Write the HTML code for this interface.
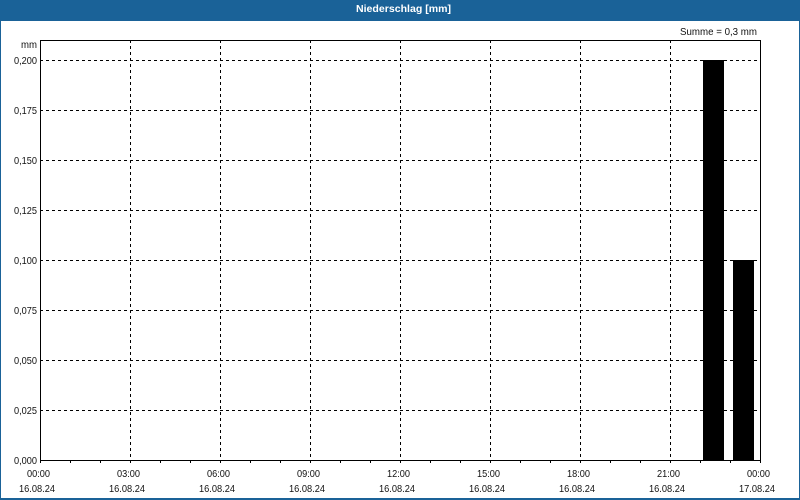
<!DOCTYPE html>
<html><head><meta charset="utf-8"><style>
html,body{margin:0;padding:0;background:#fff}
svg{display:block}
text{font-family:"Liberation Sans",sans-serif;font-size:10.5px;fill:#111}
</style></head><body>
<svg width="800" height="500" viewBox="0 0 800 500" xmlns="http://www.w3.org/2000/svg">
<rect width="800" height="500" fill="#fff"/>
<g shape-rendering="crispEdges">
<rect x="0" y="0" width="800" height="21" fill="#1a6298"/>
<rect x="0" y="0" width="1" height="500" fill="#1a6298"/>
<rect x="799" y="0" width="1" height="500" fill="#1a6298"/>
<rect x="0" y="498" width="800" height="2" fill="#1a6298"/>
<g stroke="#000" stroke-width="1" stroke-dasharray="3 3" fill="none">
<path d="M40 60.5H758M40 110.5H758M40 160.5H758M40 210.5H758M40 260.5H758M40 310.5H758M40 360.5H758M40 410.5H758"/>
<path d="M130.500 40V460M220.500 40V460M310.500 40V460M400.500 40V460M490.500 40V460M580.500 40V460M670.500 40V460"/>
</g>
<rect x="703" y="60" width="21" height="400" fill="#000"/>
<rect x="733" y="260" width="21" height="200" fill="#000"/>
<path d="M40.500 40V463M40 40.500H760.500M760.500 40V463M40 460.500H761" stroke="#000" fill="none"/>
<path d="M70.500 460V463M100.500 460V463M130.500 460V463M160.500 460V463M190.500 460V463M220.500 460V463M250.500 460V463M280.500 460V463M310.500 460V463M340.500 460V463M370.500 460V463M400.500 460V463M430.500 460V463M460.500 460V463M490.500 460V463M520.500 460V463M550.500 460V463M580.500 460V463M610.500 460V463M640.500 460V463M670.500 460V463M700.500 460V463M730.500 460V463" stroke="#000" fill="none"/>
</g>
<text x="356" y="12" textLength="95" lengthAdjust="spacingAndGlyphs" style="fill:#fff;font-weight:bold;font-size:10.5px">Niederschlag [mm]</text>
<text x="680" y="35" textLength="77" lengthAdjust="spacingAndGlyphs">Summe = 0,3 mm</text>
<text x="21" y="48" textLength="16" lengthAdjust="spacingAndGlyphs">mm</text>
<g>
<text x="14" y="64" textLength="23" lengthAdjust="spacingAndGlyphs">0,200</text>
<text x="14" y="114" textLength="23" lengthAdjust="spacingAndGlyphs">0,175</text>
<text x="14" y="164" textLength="23" lengthAdjust="spacingAndGlyphs">0,150</text>
<text x="14" y="214" textLength="23" lengthAdjust="spacingAndGlyphs">0,125</text>
<text x="14" y="264" textLength="23" lengthAdjust="spacingAndGlyphs">0,100</text>
<text x="14" y="314" textLength="23" lengthAdjust="spacingAndGlyphs">0,075</text>
<text x="14" y="364" textLength="23" lengthAdjust="spacingAndGlyphs">0,050</text>
<text x="14" y="414" textLength="23" lengthAdjust="spacingAndGlyphs">0,025</text>
<text x="14" y="464" textLength="23" lengthAdjust="spacingAndGlyphs">0,000</text>
</g>
<g>
<text x="27" y="477" textLength="23" lengthAdjust="spacingAndGlyphs">00:00</text><text x="19" y="492" textLength="36" lengthAdjust="spacingAndGlyphs">16.08.24</text>
<text x="117" y="477" textLength="23" lengthAdjust="spacingAndGlyphs">03:00</text><text x="109" y="492" textLength="36" lengthAdjust="spacingAndGlyphs">16.08.24</text>
<text x="207" y="477" textLength="23" lengthAdjust="spacingAndGlyphs">06:00</text><text x="199" y="492" textLength="36" lengthAdjust="spacingAndGlyphs">16.08.24</text>
<text x="297" y="477" textLength="23" lengthAdjust="spacingAndGlyphs">09:00</text><text x="289" y="492" textLength="36" lengthAdjust="spacingAndGlyphs">16.08.24</text>
<text x="387" y="477" textLength="23" lengthAdjust="spacingAndGlyphs">12:00</text><text x="379" y="492" textLength="36" lengthAdjust="spacingAndGlyphs">16.08.24</text>
<text x="477" y="477" textLength="23" lengthAdjust="spacingAndGlyphs">15:00</text><text x="469" y="492" textLength="36" lengthAdjust="spacingAndGlyphs">16.08.24</text>
<text x="567" y="477" textLength="23" lengthAdjust="spacingAndGlyphs">18:00</text><text x="559" y="492" textLength="36" lengthAdjust="spacingAndGlyphs">16.08.24</text>
<text x="657" y="477" textLength="23" lengthAdjust="spacingAndGlyphs">21:00</text><text x="649" y="492" textLength="36" lengthAdjust="spacingAndGlyphs">16.08.24</text>
<text x="747" y="477" textLength="23" lengthAdjust="spacingAndGlyphs">00:00</text><text x="739" y="492" textLength="36" lengthAdjust="spacingAndGlyphs">17.08.24</text>
</g>
</svg>
</body></html>
